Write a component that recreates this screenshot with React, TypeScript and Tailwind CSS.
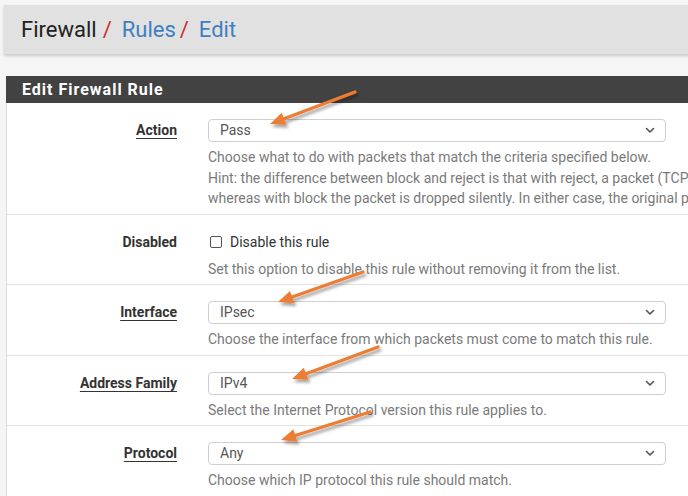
import React from 'react';

const font = { fontFamily: 'Roboto, "Liberation Sans", sans-serif' };

const ARROWS = [
  { t: [355, 92], p: [270, 124] },
  { t: [363, 272], p: [278, 302] },
  { t: [378, 347], p: [292, 379] },
  { t: [370, 412], p: [281, 440] },
];

const Chevron = () => (
  <svg width="10" height="7" viewBox="0 0 10 7" className="text-[#555]">
    <path d="M1.5 1.5 L5 5 L8.5 1.5" fill="none" stroke="currentColor" strokeWidth="1.6" strokeLinecap="round" strokeLinejoin="round" />
  </svg>
);

const Select = ({ value }: { value: string }) => (
  <div className="w-[458px] h-[23px] border border-[#cfcfcf] rounded-[4px] bg-white flex items-center justify-between pl-[11px] pr-[10px] text-[14px] text-[#555]">
    <span>{value}</span>
    <Chevron />
  </div>
);

const Row = ({ label, required, children }: { label: string; required?: boolean; children: React.ReactNode }) => (
  <div className="flex border-b border-[#e2e2e2] pt-[16px] pb-[5px]">
    <div className="w-[170px] shrink-0 text-right h-[23px] leading-[22px] text-[14px] font-bold text-[#333]">
      <span className={required ? 'underline underline-offset-[3px]' : ''}>{label}</span>
    </div>
    <div className="ml-[31px] w-[760px] shrink-0">{children}</div>
  </div>
);

const Help = ({ children }: { children: React.ReactNode }) => (
  <div className="mt-[5px] text-[14px] leading-[20.5px] text-[#7a7a7a] whitespace-nowrap">{children}</div>
);

const Arrows = () => (
  <svg className="absolute inset-0 pointer-events-none" width="688" height="496">
    <defs>
      <filter id="sh" x="-20%" y="-40%" width="140%" height="180%">
        <feDropShadow dx="2" dy="3" stdDeviation="1.8" floodColor="#000" floodOpacity="0.35" />
      </filter>
    </defs>
    {ARROWS.map((a, i) => {
      const [tx, ty] = a.t;
      const [px, py] = a.p;
      const len = Math.hypot(px - tx, py - ty);
      const dx = (px - tx) / len;
      const dy = (py - ty) / len;
      const bx = px - dx * 15;
      const by = py - dy * 15;
      const nx = -dy * 6.5;
      const ny = dx * 6.5;
      return (
        <g key={i} filter="url(#sh)">
          <line x1={tx} y1={ty} x2={bx} y2={by} stroke="#ed7d31" strokeWidth="3.2" strokeLinecap="round" />
          <polygon points={`${px},${py} ${bx + nx},${by + ny} ${bx - nx},${by - ny}`} fill="#ed7d31" />
        </g>
      );
    })}
  </svg>
);

export default function App() {
  return (
    <div className="relative w-[688px] h-[496px] overflow-hidden bg-[#f5f5f5]" style={font}>
      {/* Breadcrumb */}
      <div className="mt-[5px] ml-[4px] w-[720px] h-[49px] bg-[#e1e1e1] shadow-[0_2px_3px_rgba(0,0,0,0.18)] flex items-center pl-[17px] text-[22px]">
        <span className="text-[#222]">Firewall</span>
        <span className="text-[#c9302c] ml-[6px]">/</span>
        <span className="text-[#3f7fc1] ml-[10px]">Rules</span>
        <span className="text-[#c9302c] ml-[4px]">/</span>
        <span className="text-[#3f7fc1] ml-[10px]">Edit</span>
      </div>

      {/* Panel */}
      <div className="mt-[22px] ml-[6px] w-[800px]">
        <div className="h-[27px] bg-[#424242] text-white font-bold text-[16px] tracking-[1px] flex items-center pl-[16px]">
          Edit Firewall Rule
        </div>
        <div className="bg-white border-l border-[#dcdcdc]">
          <Row label="Action" required>
            <Select value="Pass" />
            <Help>
              Choose what to do with packets that match the criteria specified below.
              <br />
              Hint: the difference between block and reject is that with reject, a packet (TCP RST or ICMP port unreachable for UDP) is returned to the sender,
              <br />
              whereas with block the packet is dropped silently. In either case, the original packet is discarded.
            </Help>
          </Row>
          <Row label="Disabled">
            <label className="h-[23px] flex items-center text-[14px] text-[#333]">
              <span className="ml-[2px] w-[12px] h-[12px] border border-[#555] rounded-[2px] bg-white" />
              <span className="ml-[8px]">Disable this rule</span>
            </label>
            <Help>Set this option to disable this rule without removing it from the list.</Help>
          </Row>
          <Row label="Interface" required>
            <Select value="IPsec" />
            <Help>Choose the interface from which packets must come to match this rule.</Help>
          </Row>
          <Row label="Address Family" required>
            <Select value="IPv4" />
            <Help>Select the Internet Protocol version this rule applies to.</Help>
          </Row>
          <Row label="Protocol" required>
            <Select value="Any" />
            <Help>Choose which IP protocol this rule should match.</Help>
          </Row>
        </div>
      </div>

      <Arrows />
    </div>
  );
}
